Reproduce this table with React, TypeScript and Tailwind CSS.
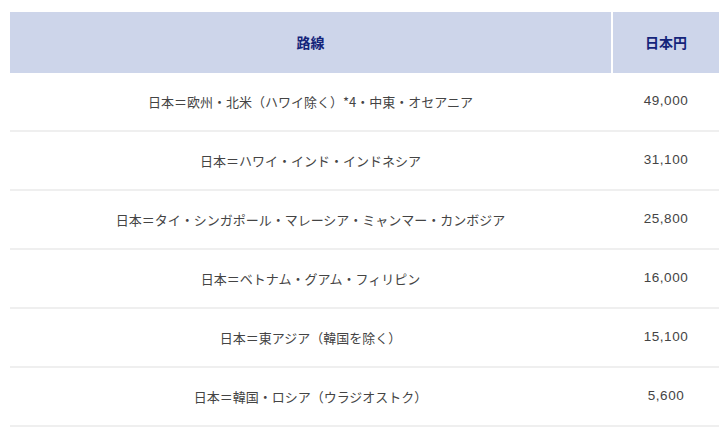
const rows: { route: string; price: string }[] = [
  { route: "日本＝欧州・北米（ハワイ除く）*4・中東・オセアニア", price: "49,000" },
  { route: "日本＝ハワイ・インド・インドネシア", price: "31,100" },
  { route: "日本＝タイ・シンガポール・マレーシア・ミャンマー・カンボジア", price: "25,800" },
  { route: "日本＝ベトナム・グアム・フィリピン", price: "16,000" },
  { route: "日本＝東アジア（韓国を除く）", price: "15,100" },
  { route: "日本＝韓国・ロシア（ウラジオストク）", price: "5,600" },
];

const font = { fontFamily: '"Noto Sans CJK JP", "Liberation Sans", sans-serif' };

export default function App() {
  return (
    <div className="min-h-[435px] w-[728px] bg-white pl-[10px] pt-3" style={font}>
      <div className="w-[709px]">
        {/* header */}
        <div className="grid h-[61px] grid-cols-[601px_106px] gap-x-[2px] text-[14px] font-bold text-[#14247a]">
          <div className="flex items-center justify-center bg-[#cdd5ea]">路線</div>
          <div className="flex items-center justify-center bg-[#cdd5ea]">日本円</div>
        </div>

        {rows.map((r) => (
          <div
            key={r.route}
            className="grid h-[59px] grid-cols-[601px_108px] border-b-2 border-[#efefef] text-[13px] text-[#444]"
          >
            <div className="flex items-center justify-center">{r.route}</div>
            <div
              className="flex items-center justify-center pl-[2px] text-[13.5px] tracking-[0.04em]"
              style={{ fontFamily: '"Liberation Sans", sans-serif' }}
            >
              {r.price}
            </div>
          </div>
        ))}
      </div>
    </div>
  );
}
